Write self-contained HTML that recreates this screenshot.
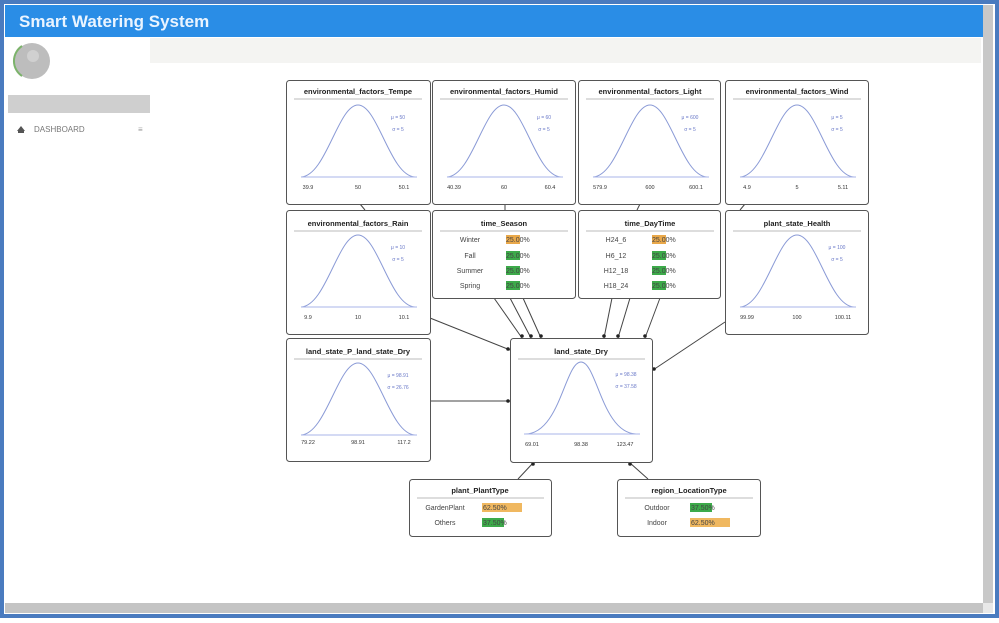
<!DOCTYPE html>
<html><head><meta charset="utf-8"><style>
body{margin:0;width:999px;height:618px;overflow:hidden;background:#fff;font-family:"Liberation Sans",sans-serif}
</style></head><body>
<svg width="999" height="618" xmlns="http://www.w3.org/2000/svg" font-family="Liberation Sans, sans-serif">
<rect x="0" y="0" width="999" height="618" fill="#4a7bbf"/>
<rect x="4" y="4" width="991" height="610" fill="#fff"/>
<rect x="5" y="5" width="978" height="32" fill="#2a8de6"/>
<text x="19" y="27" font-size="17" font-weight="bold" fill="#eaf4ff">Smart Watering System</text>
<rect x="150" y="38" width="831" height="25" fill="#f4f4f2"/>
<rect x="983" y="5" width="10" height="598" fill="#c8c8c8"/>
<rect x="5" y="603" width="978" height="10" fill="#c4c4c4"/>
<rect x="983" y="603" width="10" height="10" fill="#e8e8e8"/>
<circle cx="32" cy="61" r="18" fill="#bdbdbd"/>
<path d="M22,46 A18,18 0 0,0 22,76" stroke="#7cb36b" stroke-width="2" fill="none"/>
<circle cx="33" cy="56" r="6" fill="#d0d0d0"/>
<rect x="8" y="95" width="142" height="18" fill="#cfcfcf"/>
<path d="M17,131 L21,126 L25,131 Z" fill="#555"/><rect x="18" y="130" width="6" height="3" fill="#555"/>
<text x="34" y="132" font-size="8" fill="#777">DASHBOARD</text>
<text x="138" y="132" font-size="8" fill="#999">≡</text>

<g stroke="#444" stroke-width="1" fill="none">
<line x1="360" y1="204" x2="365" y2="210"/>
<line x1="505" y1="204" x2="505" y2="210"/>
<line x1="640" y1="204" x2="637" y2="210"/>
<line x1="745" y1="204" x2="740" y2="210"/>
<line x1="430" y1="318" x2="510" y2="350"/>
<line x1="494" y1="298" x2="522" y2="338"/>
<line x1="510" y1="298" x2="531" y2="338"/>
<line x1="523" y1="298" x2="541" y2="338"/>
<line x1="612" y1="298" x2="604" y2="338"/>
<line x1="630" y1="298" x2="618" y2="338"/>
<line x1="660" y1="298" x2="645" y2="338"/>
<line x1="725" y1="322" x2="653" y2="370"/>
<line x1="430" y1="401" x2="510" y2="401"/>
<line x1="518" y1="479" x2="533" y2="463"/>
<line x1="648" y1="479" x2="630" y2="463"/>
</g>
<g fill="#222">
<circle cx="522" cy="336" r="1.8"/><circle cx="531" cy="336" r="1.8"/><circle cx="541" cy="336" r="1.8"/>
<circle cx="604" cy="336" r="1.8"/><circle cx="618" cy="336" r="1.8"/><circle cx="645" cy="336" r="1.8"/>
<circle cx="508" cy="349" r="1.8"/><circle cx="654" cy="369" r="1.8"/><circle cx="508" cy="401" r="1.8"/>
<circle cx="533" cy="464" r="1.8"/><circle cx="630" cy="464" r="1.8"/>
</g>

<!-- gaussian nodes -->
<g font-size="7" text-anchor="middle">
<g transform="translate(286,80)">
<rect x="0.5" y="0.5" width="144" height="124" rx="3" fill="#fff" stroke="#555"/>
<text x="72" y="14" font-weight="bold" font-size="7.5" fill="#222">environmental_factors_Tempe</text>
<line x1="8" y1="19" x2="136" y2="19" stroke="#bbb"/>
<path d="M15,97 C40,96 52,25 72,25 C92,25 104,96 129,97" stroke="#8a9ad6" fill="none"/>
<line x1="15" y1="97" x2="131" y2="97" stroke="#a9b6e8"/>
<text x="22" y="109" font-size="5.5" fill="#333">39.9</text><text x="72" y="109" font-size="5.5" fill="#333">50</text><text x="118" y="109" font-size="5.5" fill="#333">50.1</text>
<text x="112" y="39" font-size="5" fill="#6a79c8">μ = 50</text><text x="112" y="51" font-size="5" fill="#6a79c8">σ = 5</text>
</g>
<g transform="translate(432,80)">
<rect x="0.5" y="0.5" width="143" height="124" rx="3" fill="#fff" stroke="#555"/>
<text x="72" y="14" font-weight="bold" font-size="7.5" fill="#222">environmental_factors_Humid</text>
<line x1="8" y1="19" x2="136" y2="19" stroke="#bbb"/>
<path d="M15,97 C40,96 52,25 72,25 C92,25 104,96 129,97" stroke="#8a9ad6" fill="none"/>
<line x1="15" y1="97" x2="131" y2="97" stroke="#a9b6e8"/>
<text x="22" y="109" font-size="5.5" fill="#333">40.39</text><text x="72" y="109" font-size="5.5" fill="#333">60</text><text x="118" y="109" font-size="5.5" fill="#333">60.4</text>
<text x="112" y="39" font-size="5" fill="#6a79c8">μ = 60</text><text x="112" y="51" font-size="5" fill="#6a79c8">σ = 5</text>
</g>
<g transform="translate(578,80)">
<rect x="0.5" y="0.5" width="142" height="124" rx="3" fill="#fff" stroke="#555"/>
<text x="72" y="14" font-weight="bold" font-size="7.5" fill="#222">environmental_factors_Light</text>
<line x1="8" y1="19" x2="136" y2="19" stroke="#bbb"/>
<path d="M15,97 C40,96 52,25 72,25 C92,25 104,96 129,97" stroke="#8a9ad6" fill="none"/>
<line x1="15" y1="97" x2="131" y2="97" stroke="#a9b6e8"/>
<text x="22" y="109" font-size="5.5" fill="#333">579.9</text><text x="72" y="109" font-size="5.5" fill="#333">600</text><text x="118" y="109" font-size="5.5" fill="#333">600.1</text>
<text x="112" y="39" font-size="5" fill="#6a79c8">μ = 600</text><text x="112" y="51" font-size="5" fill="#6a79c8">σ = 5</text>
</g>
<g transform="translate(725,80)">
<rect x="0.5" y="0.5" width="143" height="124" rx="3" fill="#fff" stroke="#555"/>
<text x="72" y="14" font-weight="bold" font-size="7.5" fill="#222">environmental_factors_Wind</text>
<line x1="8" y1="19" x2="136" y2="19" stroke="#bbb"/>
<path d="M15,97 C40,96 52,25 72,25 C92,25 104,96 129,97" stroke="#8a9ad6" fill="none"/>
<line x1="15" y1="97" x2="131" y2="97" stroke="#a9b6e8"/>
<text x="22" y="109" font-size="5.5" fill="#333">4.9</text><text x="72" y="109" font-size="5.5" fill="#333">5</text><text x="118" y="109" font-size="5.5" fill="#333">5.11</text>
<text x="112" y="39" font-size="5" fill="#6a79c8">μ = 5</text><text x="112" y="51" font-size="5" fill="#6a79c8">σ = 5</text>
</g>
<g transform="translate(286,210)">
<rect x="0.5" y="0.5" width="144" height="124" rx="3" fill="#fff" stroke="#555"/>
<text x="72" y="16" font-weight="bold" font-size="7.5" fill="#222">environmental_factors_Rain</text>
<line x1="8" y1="21" x2="136" y2="21" stroke="#bbb"/>
<path d="M15,97 C40,96 52,25 72,25 C92,25 104,96 129,97" stroke="#8a9ad6" fill="none"/>
<line x1="15" y1="97" x2="131" y2="97" stroke="#a9b6e8"/>
<text x="22" y="109" font-size="5.5" fill="#333">9.9</text><text x="72" y="109" font-size="5.5" fill="#333">10</text><text x="118" y="109" font-size="5.5" fill="#333">10.1</text>
<text x="112" y="39" font-size="5" fill="#6a79c8">μ = 10</text><text x="112" y="51" font-size="5" fill="#6a79c8">σ = 5</text>
</g>
<g transform="translate(725,210)">
<rect x="0.5" y="0.5" width="143" height="124" rx="3" fill="#fff" stroke="#555"/>
<text x="72" y="16" font-weight="bold" font-size="7.5" fill="#222">plant_state_Health</text>
<line x1="8" y1="21" x2="136" y2="21" stroke="#bbb"/>
<path d="M15,97 C40,96 52,25 72,25 C92,25 104,96 129,97" stroke="#8a9ad6" fill="none"/>
<line x1="15" y1="97" x2="131" y2="97" stroke="#a9b6e8"/>
<text x="22" y="109" font-size="5.5" fill="#333">99.99</text><text x="72" y="109" font-size="5.5" fill="#333">100</text><text x="118" y="109" font-size="5.5" fill="#333">100.11</text>
<text x="112" y="39" font-size="5" fill="#6a79c8">μ = 100</text><text x="112" y="51" font-size="5" fill="#6a79c8">σ = 5</text>
</g>
<g transform="translate(286,338)">
<rect x="0.5" y="0.5" width="144" height="123" rx="3" fill="#fff" stroke="#555"/>
<text x="72" y="16" font-weight="bold" font-size="7.5" fill="#222">land_state_P_land_state_Dry</text>
<line x1="8" y1="21" x2="136" y2="21" stroke="#bbb"/>
<path d="M15,97 C40,96 52,25 72,25 C92,25 104,96 129,97" stroke="#8a9ad6" fill="none"/>
<line x1="15" y1="97" x2="131" y2="97" stroke="#a9b6e8"/>
<text x="22" y="106" font-size="5.5" fill="#333">79.22</text><text x="72" y="106" font-size="5.5" fill="#333">98.91</text><text x="118" y="106" font-size="5.5" fill="#333">117.2</text>
<text x="112" y="39" font-size="5" fill="#6a79c8">μ = 98.91</text><text x="112" y="51" font-size="5" fill="#6a79c8">σ = 26.76</text>
</g>
<g transform="translate(510,338)">
<rect x="0.5" y="0.5" width="142" height="124" rx="3" fill="#fff" stroke="#555"/>
<text x="71" y="16" font-weight="bold" font-size="7.5" fill="#222">land_state_Dry</text>
<line x1="8" y1="21" x2="135" y2="21" stroke="#bbb"/>
<path d="M15,96 C50,96 55,24 71,24 C87,24 92,96 127,96" stroke="#8a9ad6" fill="none"/>
<line x1="14" y1="96" x2="130" y2="96" stroke="#a9b6e8"/>
<text x="22" y="108" font-size="5.5" fill="#333">69.01</text><text x="71" y="108" font-size="5.5" fill="#333">98.38</text><text x="115" y="108" font-size="5.5" fill="#333">123.47</text>
<text x="116" y="38" font-size="5" fill="#6a79c8">μ = 98.38</text><text x="116" y="50" font-size="5" fill="#6a79c8">σ = 37.58</text>
</g>
</g>

<!-- categorical nodes -->
<g font-size="7">
<g transform="translate(432,210)">
<rect x="0.5" y="0.5" width="143" height="88" rx="3" fill="#fff" stroke="#555"/>
<text x="72" y="16" text-anchor="middle" font-weight="bold" font-size="7.5" fill="#222">time_Season</text>
<line x1="8" y1="21" x2="136" y2="21" stroke="#bbb"/>
<text x="38" y="32" text-anchor="middle" fill="#444">Winter</text><rect x="74" y="25" width="14" height="9" fill="#e9a84a"/><text x="74" y="32" fill="#444">25.00%</text>
<text x="38" y="48" text-anchor="middle" fill="#444">Fall</text><rect x="74" y="41" width="14" height="9" fill="#3daa4a"/><text x="74" y="48" fill="#444">25.00%</text>
<text x="38" y="63" text-anchor="middle" fill="#444">Summer</text><rect x="74" y="56" width="14" height="9" fill="#3daa4a"/><text x="74" y="63" fill="#444">25.00%</text>
<text x="38" y="78" text-anchor="middle" fill="#444">Spring</text><rect x="74" y="71" width="14" height="9" fill="#3daa4a"/><text x="74" y="78" fill="#444">25.00%</text>
</g>
<g transform="translate(578,210)">
<rect x="0.5" y="0.5" width="142" height="88" rx="3" fill="#fff" stroke="#555"/>
<text x="72" y="16" text-anchor="middle" font-weight="bold" font-size="7.5" fill="#222">time_DayTime</text>
<line x1="8" y1="21" x2="136" y2="21" stroke="#bbb"/>
<text x="38" y="32" text-anchor="middle" fill="#444">H24_6</text><rect x="74" y="25" width="14" height="9" fill="#e9a84a"/><text x="74" y="32" fill="#444">25.00%</text>
<text x="38" y="48" text-anchor="middle" fill="#444">H6_12</text><rect x="74" y="41" width="14" height="9" fill="#3daa4a"/><text x="74" y="48" fill="#444">25.00%</text>
<text x="38" y="63" text-anchor="middle" fill="#444">H12_18</text><rect x="74" y="56" width="14" height="9" fill="#3daa4a"/><text x="74" y="63" fill="#444">25.00%</text>
<text x="38" y="78" text-anchor="middle" fill="#444">H18_24</text><rect x="74" y="71" width="14" height="9" fill="#3daa4a"/><text x="74" y="78" fill="#444">25.00%</text>
</g>
<g transform="translate(409,479)">
<rect x="0.5" y="0.5" width="142" height="57" rx="3" fill="#fff" stroke="#555"/>
<text x="71" y="14" text-anchor="middle" font-weight="bold" font-size="7.5" fill="#222">plant_PlantType</text>
<line x1="8" y1="19" x2="135" y2="19" stroke="#bbb"/>
<text x="36" y="31" text-anchor="middle" fill="#444">GardenPlant</text><rect x="73" y="24" width="40" height="9" fill="#f0b860"/><text x="74" y="31" fill="#444">62.50%</text>
<text x="36" y="46" text-anchor="middle" fill="#444">Others</text><rect x="73" y="39" width="22" height="9" fill="#3daa4a"/><text x="74" y="46" fill="#444">37.50%</text>
</g>
<g transform="translate(617,479)">
<rect x="0.5" y="0.5" width="143" height="57" rx="3" fill="#fff" stroke="#555"/>
<text x="72" y="14" text-anchor="middle" font-weight="bold" font-size="7.5" fill="#222">region_LocationType</text>
<line x1="8" y1="19" x2="136" y2="19" stroke="#bbb"/>
<text x="40" y="31" text-anchor="middle" fill="#444">Outdoor</text><rect x="73" y="24" width="22" height="9" fill="#3daa4a"/><text x="74" y="31" fill="#444">37.50%</text>
<text x="40" y="46" text-anchor="middle" fill="#444">Indoor</text><rect x="73" y="39" width="40" height="9" fill="#f0b860"/><text x="74" y="46" fill="#444">62.50%</text>
</g>
</g>
</svg>
</body></html>
